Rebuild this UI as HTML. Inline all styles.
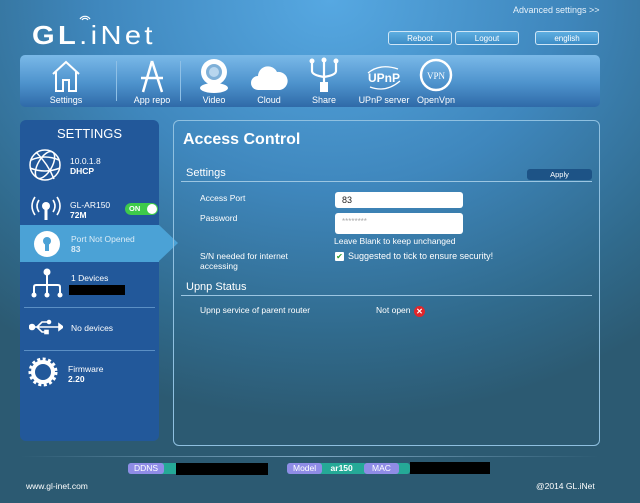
<!DOCTYPE html>
<html><head><meta charset="utf-8"><style>
*{margin:0;padding:0;box-sizing:border-box}
body{width:640px;height:503px;overflow:hidden;font-family:"Liberation Sans",sans-serif;color:#fff;position:relative;
background:radial-gradient(ellipse 520px 420px at 330px 0px,#56a8e2 0%,#3f87bd 45%,#306a8c 80%,#2c5a72 100%);}
.a{position:absolute}
.btn{position:absolute;top:31px;height:14px;border:1px solid #cfe6f7;border-radius:3px;background:linear-gradient(#5eaee0,#3d8dc7);font-size:8px;text-align:center;line-height:13px}
.nav{left:20px;top:55px;width:580px;height:52px;border-radius:5px;background:linear-gradient(#7ab9e8,#4d92cc 55%,#2f6aa8)}
.ni{position:absolute;top:0;width:60px;text-align:center;font-size:9px;}
.ni span{position:absolute;top:40px;left:0;width:100%}
.sb{left:20px;top:120px;width:139px;height:321px;background:#22589a;border-radius:6px}
.st{font-size:8.5px;line-height:10px}
.pn{left:173px;top:120px;width:427px;height:326px;border:1px solid #8fc0e0;border-radius:6px}
.lbl{font-size:8.5px;position:absolute}
.inp{position:absolute;background:#fff;border-radius:3px;color:#222;font-size:9px}
.hr{position:absolute;height:1px;background:#9cc6e2}
.bd{position:absolute;top:463px;height:11px;border-radius:3px;font-size:8.5px;line-height:11px}
</style></head><body>
<div class="a" style="left:513px;top:5px;font-size:9px;color:#e6f1fa">Advanced settings &gt;&gt;</div>
<div class="a" style="left:32px;top:20px;font-size:26px;letter-spacing:3px;transform:scaleX(1.12);transform-origin:left"><b>GL</b>.iNet</div>
<svg class="a" style="left:79px;top:13px" width="12" height="8"><path d="M1 6 A6 6 0 0 1 11 6 M3 7 A3.5 3.5 0 0 1 9 7" stroke="#fff" fill="none" stroke-width="1.2"/></svg>
<div class="btn" style="left:388px;width:64px">Reboot</div>
<div class="btn" style="left:455px;width:64px">Logout</div>
<div class="btn" style="left:535px;width:64px">english</div>

<div class="a nav">
 <div class="ni" style="left:16px"><svg width="34" height="36" style="margin-top:3px"><path d="M4 16 L17 4 L30 16 M7 14 V33 H14 V22 H20 V33 H27 V14" stroke="#fff" stroke-width="2" fill="none"/></svg><span>Settings</span></div>
 <div class="a" style="left:96px;top:6px;width:1px;height:40px;background:#8fc0e6"></div>
 <div class="ni" style="left:102px"><svg width="34" height="36" style="margin-top:3px"><path d="M17 3 L8 34 M17 3 L27 34 M6 20 H28" stroke="#fff" stroke-width="2.5" fill="none"/></svg><span>App repo</span></div>
 <div class="a" style="left:160px;top:6px;width:1px;height:40px;background:#8fc0e6"></div>
 <div class="ni" style="left:164px"><svg width="34" height="36" style="margin-top:2px"><ellipse cx="17" cy="31" rx="14" ry="5" fill="#fff"/><circle cx="17" cy="15" r="13" fill="#fff"/><circle cx="17" cy="15" r="8" fill="#7fb0d8"/><circle cx="17" cy="15" r="5" fill="#b8d6ee"/></svg><span>Video</span></div>
 <div class="ni" style="left:219px"><svg width="38" height="36" style="margin-top:4px"><path d="M8 31 A7 7 0 0 1 8 17 A10 10 0 0 1 27 13 A9 9 0 0 1 30 31 Z" fill="#fff"/></svg><span>Cloud</span></div>
 <div class="ni" style="left:274px"><svg width="34" height="36" style="margin-top:2px"><path d="M5 5 V14 Q5 18 17 20 Q29 18 29 14 V5 M17 3 V26" stroke="#fff" stroke-width="2.2" fill="none"/><circle cx="5" cy="4" r="2.5" fill="#fff"/><circle cx="17" cy="3" r="2.5" fill="#fff"/><circle cx="29" cy="4" r="2.5" fill="#fff"/><rect x="13" y="25" width="8" height="10" fill="#fff"/></svg><span>Share</span></div>
 <div class="ni" style="left:334px"><svg width="40" height="36" style="margin-top:4px"><text x="20" y="23" font-family="Liberation Sans" font-weight="bold" font-size="12" fill="#fff" text-anchor="middle">UPnP</text><path d="M4 14 Q16 4 34 10 M6 28 Q22 34 36 22" stroke="#fff" stroke-width="1.3" fill="none"/></svg><span>UPnP server</span></div>
 <div class="ni" style="left:386px"><svg width="36" height="36" style="margin-top:3px"><circle cx="18" cy="17" r="15" stroke="#fff" stroke-width="2.5" fill="none"/><text x="18" y="21" font-family="Liberation Serif" font-size="9" fill="#fff" text-anchor="middle">VPN</text></svg><span>OpenVpn</span></div>
</div>

<div class="a sb">
 <div class="a" style="top:6px;width:100%;text-align:center;font-size:13px">SETTINGS</div>
 <svg class="a" style="left:8px;top:28px" width="34" height="34"><g stroke="#fff" stroke-width="1.5" fill="none"><circle cx="17" cy="17" r="15"/><ellipse cx="17" cy="17" rx="7" ry="15" transform="rotate(30 17 17)"/><path d="M3 12 Q17 6 31 12 M2 20 Q17 26 32 20 M8 4 Q20 16 26 31"/></g></svg>
 <div class="a st" style="left:50px;top:36px">10.0.1.8<br><b>DHCP</b></div>
 <svg class="a" style="left:9px;top:74px" width="34" height="28"><g stroke="#fff" stroke-width="1.6" fill="none"><path d="M6 3 Q0 12 6 21 M10 6 Q6 12 10 18 M28 3 Q34 12 28 21 M24 6 Q28 12 24 18"/></g><circle cx="17" cy="12" r="4" fill="#fff"/><rect x="15.5" y="12" width="3" height="14" fill="#fff"/></svg>
 <div class="a st" style="left:50px;top:80px">GL-AR150<br><b>72M</b></div>
 <div class="a" style="left:105px;top:83px;width:33px;height:12px;border-radius:6px;background:#3ecb4a;font-size:7.5px;font-weight:bold;line-height:12px;padding-left:4px">ON<div class="a" style="right:1px;top:1px;width:10px;height:10px;border-radius:5px;background:#fff"></div></div>
 <div class="a" style="left:0;top:105px;width:139px;height:37px;background:#4ba2d6"></div>
 <div class="a" style="left:139px;top:105px;width:0;height:0;border-top:18.5px solid transparent;border-bottom:18.5px solid transparent;border-left:19px solid #4ba2d6"></div>
 <svg class="a" style="left:12px;top:109px" width="30" height="30"><circle cx="15" cy="15" r="13" fill="#fff"/><circle cx="15" cy="12" r="4" fill="#4ba2d6"/><rect x="13" y="12" width="4" height="10" fill="#4ba2d6"/></svg>
 <div class="a st" style="left:51px;top:114px;color:#dbecf7">Port Not Opened<br><b>83</b></div>
 <svg class="a" style="left:11px;top:147px" width="32" height="32"><g stroke="#fff" stroke-width="2" fill="none"><path d="M16 4 V18 M3 28 V20 Q3 18 5 18 H27 Q29 18 29 20 V28 M16 18 V28"/></g><circle cx="16" cy="5" r="3.5" fill="#fff"/><circle cx="3" cy="28" r="2.5" fill="#fff"/><circle cx="16" cy="28" r="2.5" fill="#fff"/><circle cx="29" cy="28" r="2.5" fill="#fff"/></svg>
 <div class="a st" style="left:51px;top:153px">1 Devices</div>
 <div class="a" style="left:49px;top:165px;width:56px;height:10px;background:#000"></div>
 <div class="hr" style="left:4px;top:187px;width:131px;background:#5b8fc4"></div>
 <svg class="a" style="left:9px;top:199px" width="34" height="16"><g stroke="#fff" stroke-width="1.6" fill="#fff"><path d="M3 8 H30 M8 8 L13 3 H19 M8 8 L13 13 H17" fill="none"/><circle cx="3" cy="8" r="2.5"/><circle cx="20" cy="3" r="1.5"/><rect x="16" y="11.5" width="3" height="3"/><path d="M30 5 L34 8 L30 11 Z"/></g></svg>
 <div class="a st" style="left:51px;top:203px">No devices</div>
 <div class="hr" style="left:4px;top:230px;width:131px;background:#5b8fc4"></div>
 <svg class="a" style="left:8px;top:237px" width="30" height="30"><circle cx="15" cy="15" r="10" stroke="#fff" stroke-width="4" fill="none"/><circle cx="15" cy="15" r="13" stroke="#fff" stroke-width="3" stroke-dasharray="3 2.5" fill="none"/></svg>
 <div class="a st" style="left:48px;top:244px">Firmware<br><b>2.20</b></div>
</div>

<div class="a pn">
 <div class="a" style="left:9px;top:10px;font-size:16px;font-weight:bold">Access Control</div>
 <div class="a" style="left:12px;top:46px;font-size:11px">Settings</div>
 <div class="a" style="left:353px;top:48px;width:65px;height:11px;background:#1d5386;border-radius:3px;font-size:7.5px;text-align:center;line-height:11px">Apply</div>
 <div class="hr" style="left:7px;top:60px;width:411px"></div>
 <div class="lbl" style="left:26px;top:72px">Access Port</div>
 <div class="inp" style="left:161px;top:71px;width:128px;height:16px;padding:3px 7px">83</div>
 <div class="lbl" style="left:26px;top:92px">Password</div>
 <div class="inp" style="left:161px;top:92px;width:128px;height:21px;padding:4px 7px;color:#aaa;font-size:8px">********</div>
 <div class="lbl" style="left:160px;top:115px;color:#fff">Leave Blank to keep unchanged</div>
 <div class="lbl" style="left:26px;top:130px;line-height:10px">S/N needed for internet<br>accessing</div>
 <div class="a" style="left:161px;top:131px;width:9px;height:9px;background:#fff;border-radius:1px;color:#2b9a2b;font-size:8px;line-height:9px;text-align:center">✔</div>
 <div class="lbl" style="left:174px;top:130px;font-size:9px">Suggested to tick to ensure security!</div>
 <div class="a" style="left:12px;top:160px;font-size:11px">Upnp Status</div>
 <div class="hr" style="left:7px;top:174px;width:411px"></div>
 <div class="lbl" style="left:26px;top:184px">Upnp service of parent router</div>
 <div class="lbl" style="left:202px;top:184px">Not open</div>
 <div class="a" style="left:240px;top:185px;width:11px;height:11px;border-radius:6px;background:#e0262b;font-size:8px;font-weight:bold;line-height:11px;text-align:center">✕</div>
</div>

<div class="hr" style="left:20px;top:456px;width:580px;background:linear-gradient(90deg,transparent,#7fa9c4,transparent)"></div>
<div class="bd" style="left:128px;width:103px;background:#25a997"><span style="display:inline-block;background:#8f8ce6;padding:0 6px;border-radius:3px">DDNS</span></div>
<div class="a" style="left:176px;top:463px;width:92px;height:12px;background:#000"></div>
<div class="bd" style="left:287px;width:80px;background:#25a997"><span style="display:inline-block;background:#8f8ce6;padding:0 6px;border-radius:3px">Model</span> <b style="margin-left:6px">ar150</b></div>
<div class="bd" style="left:364px;width:46px;background:#25a997"><span style="display:inline-block;background:#8f8ce6;padding:0 8px;border-radius:3px">MAC</span></div>
<div class="a" style="left:410px;top:462px;width:80px;height:12px;background:#000"></div>
<div class="a" style="left:26px;top:481px;font-size:8.5px">www.gl-inet.com</div>
<div class="a" style="left:536px;top:481px;font-size:8.5px">@2014 GL.iNet</div>
</body></html>
